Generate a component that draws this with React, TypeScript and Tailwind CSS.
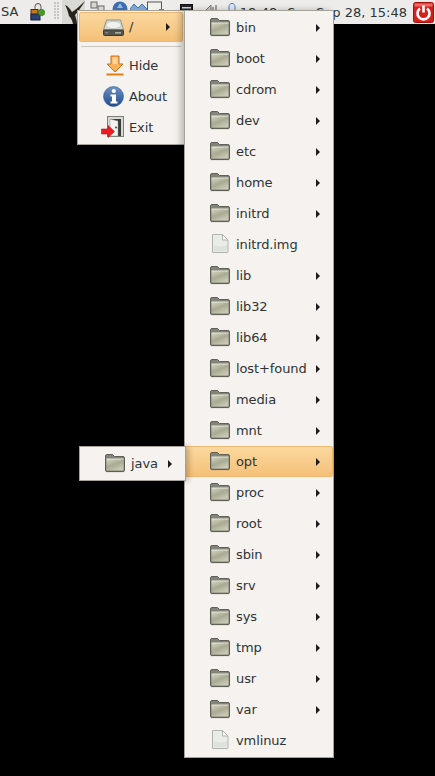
import { useId } from "react";

const rootDirs = [
  "bin", "boot", "cdrom", "dev", "etc", "home", "initrd", "initrd.img", "lib", "lib32", "lib64", "lost+found",
  "media", "mnt", "opt", "proc", "root", "sbin", "srv", "sys", "tmp", "usr", "var", "vmlinuz",
];
const plainFiles = ["initrd.img", "vmlinuz"];

const FolderIcon = () => {
  const id = useId();
  return (
    <svg width="20" height="20" viewBox="0 0 20 20" className="block shrink-0 mb-[2px]">
      <defs>
        <linearGradient id={id} x1="0" y1="0" x2="0.6" y2="1">
          <stop offset="0" stopColor="#d6d7c4" />
          <stop offset="0.55" stopColor="#a8aa92" />
          <stop offset="1" stopColor="#c8c9b5" />
        </linearGradient>
      </defs>
      <rect x="0.5" y="18" width="19" height="1.5" fill="#000" opacity="0.12" />
      <path d="M0.5 3 Q0.5 1.5 2 1.5 H7.5 L9.5 3.5 H18 Q19.5 3.5 19.5 5 V17 Q19.5 18.5 18 18.5 H2 Q0.5 18.5 0.5 17 Z" fill="#84857a" stroke="#5f6056" />
      <path d="M1.5 6 H18.5 V17.5 H1.5 Z" fill={`url(#${id})`} />
      <path d="M1.5 6 H18.5" stroke="#e6e7d9" />
    </svg>
  );
};

const FileIcon = () => (
  <svg width="20" height="21" viewBox="0 0 20 21" className="block shrink-0 mb-[2px]">
    <path d="M2.5 1.5 H12.5 L18 7 V19 Q18 19.5 17.5 19.5 H3 Q2.5 19.5 2.5 19 Z" fill="#e9ebe6" stroke="#b0b2ac" />
    <path d="M12.5 1.5 V7 H18 Z" fill="#fbfbfa" stroke="#b0b2ac" />
    <path d="M4 18 H17 V12 Q10 15 4 12 Z" fill="#dfe1dc" />
  </svg>
);

const DiskIcon = () => (
  <svg width="21" height="17" viewBox="0 0 21 17" className="block shrink-0">
    <path d="M3.5 1 H17.5 L20.5 11 H0.5 Z" fill="#d8dbd5" stroke="#8e908a" />
    <ellipse cx="10.5" cy="6" rx="7.5" ry="3.6" fill="#f1f2ef" stroke="#b7b9b3" strokeWidth="0.6" />
    <rect x="0.5" y="11" width="20" height="5.5" rx="1" fill="#55574f" stroke="#3a3b36" />
    <rect x="12" y="13" width="6" height="1.6" fill="#a9aba4" />
    <rect x="2.5" y="13" width="2.5" height="1.4" fill="#8a8c85" />
  </svg>
);

const HideIcon = () => (
  <svg width="18" height="21" viewBox="0 0 18 21" className="shrink-0">
    <path d="M5 1 H13 V9 H17 L9 17 L1 9 H5 Z" fill="#f9b35a" stroke="#ce6e12" />
    <path d="M6.5 2.5 H11.5 V9 H6.5 Z" fill="#fbd29c" />
    <rect x="0.5" y="18.5" width="17" height="2" fill="#e37e15" />
  </svg>
);

const InfoIcon = () => {
  const id = useId();
  return (
    <svg width="21" height="21" viewBox="0 0 21 21" className="shrink-0">
      <defs>
        <linearGradient id={id} x1="0" y1="0" x2="0" y2="1">
          <stop offset="0" stopColor="#6f94c4" />
          <stop offset="1" stopColor="#1f4a8c" />
        </linearGradient>
      </defs>
      <circle cx="10.5" cy="10.5" r="10" fill={`url(#${id})`} stroke="#2f5a96" strokeWidth="0.6" />
      <circle cx="10.8" cy="5" r="2.1" fill="#fff" />
      <path d="M7.5 8.5 H13 V15.5 H14.5 V17.5 H7.5 V15.5 H9 V10.5 H7.5 Z" fill="#fff" />
    </svg>
  );
};

const ExitIcon = () => (
  <svg width="23" height="23" viewBox="0 0 23 23" className="shrink-0">
    <rect x="6.5" y="0.5" width="16" height="20" fill="#d9dad6" stroke="#7d7f7a" />
    <rect x="9" y="3" width="11" height="17" fill="#3b3c39" />
    <path d="M9 3 L17 5 V20 H9 Z" fill="#f3f3f0" stroke="#8a8c86" strokeWidth="0.5" />
    <circle cx="15" cy="11.5" r="0.9" fill="#333" />
    <path d="M0.5 13 H7 V9.5 L13.5 15.5 L7 21.5 V18 H0.5 Z" fill="#ee1c25" stroke="#b50d14" strokeWidth="0.6" />
  </svg>
);

const SessionIcon = () => (
  <svg width="15" height="18" viewBox="0 0 15 18" className="shrink-0">
    <rect x="5" y="0.5" width="6" height="8" rx="3" fill="#e8e6df" stroke="#555" />
    <rect x="1" y="6.5" width="7" height="10" fill="#c6761e" stroke="#3a3020" />
    <rect x="1" y="11" width="9" height="6" fill="#2a3f73" stroke="#1c2440" />
    <circle cx="11.5" cy="9.5" r="3.2" fill="#4e9a2a" stroke="#2d6a14" strokeWidth="0.6" />
  </svg>
);

const BatIcon = () => (
  <svg width="24" height="24" viewBox="0 0 24 24" className="shrink-0">
    <path d="M3 5 C6 6 8 9 10 12 C13 10 18 6 23 1 C20 6 16 12 13 15 C14 18 15 21 15 24 H11 C10 20 9 18 7 16 C6 12 5 8 3 5 Z" fill="#2a2419" />
  </svg>
);

const PowerIcon = () => (
  <svg width="21" height="21" viewBox="0 0 21 21" className="shrink-0">
    <rect x="0.5" y="0.5" width="20" height="20" rx="2" fill="#d5201e" stroke="#a01010" />
    <rect x="1.5" y="1.5" width="18" height="3" fill="#ec6a62" />
    <path d="M7 6.5 A6 6 0 1 0 14 6.5" fill="none" stroke="#fff" strokeWidth="2.6" />
    <rect x="9.2" y="3.5" width="2.6" height="7" fill="#fff" />
  </svg>
);

// the part of the tray that shows above the open menus
const TrayIcons = () => (
  <div className="flex items-start h-6 pt-[1px]">
    <svg width="16" height="16" viewBox="0 0 16 16" className="ml-[5px]">
      <rect x="1" y="1" width="6" height="6" fill="#d8d8d2" stroke="#666" />
      <rect x="8" y="5" width="6" height="6" fill="#d8d8d2" stroke="#666" />
    </svg>
    <svg width="16" height="16" viewBox="0 0 16 16" className="ml-[6px]">
      <circle cx="8" cy="8" r="7.5" fill="#3a6eb0" />
      <path d="M8 2 L11 7 H5 Z" fill="#fff" opacity="0.5" />
    </svg>
    <svg width="17" height="16" viewBox="0 0 17 16" className="ml-[2px]">
      <path d="M0 8 L4 3 L8 7 L12 3 L17 8 V16 H0 Z" fill="#7ba6d4" stroke="#3f74b0" />
    </svg>
    <svg width="18" height="16" viewBox="0 0 18 16">
      <rect x="0.5" y="1" width="14" height="14" fill="#f0f0ec" stroke="#555" />
      <rect x="12" y="8" width="5" height="5" fill="#5c9a3a" />
    </svg>
    <svg width="13" height="16" viewBox="0 0 13 16" className="ml-[15px] mt-[3px]">
      <rect x="0.5" y="0.5" width="12" height="11" fill="#26272a" stroke="#111" />
      <rect x="2" y="3" width="9" height="1.5" fill="#d8d8d2" />
    </svg>
    <svg width="17" height="14" viewBox="0 0 17 14" className="ml-[7px] mt-[3px]">
      <path d="M1 11 L11 1 V11 Z" fill="#c9c9c4" stroke="#77776f" />
      <path d="M13 3 V12 M16 1 V12" stroke="#55554f" />
    </svg>
    <svg width="10" height="14" viewBox="0 0 10 14" className="ml-[10px] mt-[2px]">
      <path d="M5 0.5 A3 3 0 0 1 8 4 V8 H2 V4 A3 3 0 0 1 5 0.5 Z" fill="#dfe8f4" stroke="#4c7cc0" />
    </svg>
  </div>
);

const Arrow = () => <span className="block w-0 h-0 border-y-[4px] border-y-transparent border-l-[4px] border-l-[#1c1c1c]" />;

const DirRow = ({ name }: { name: string }) => {
  const active = name === "opt";
  return (
    <div
      className={
        active
          ? "h-[31px] flex items-center pl-[24px] pr-[12px] rounded-[2px] border border-[#edb970] bg-gradient-to-b from-[#fbd89f] to-[#f5c078]"
          : "h-[31px] flex items-center pl-[25px] pr-[13px]"
      }
    >
      {plainFiles.includes(name) ? <FileIcon /> : <FolderIcon />}
      <span className="ml-[6px] flex-1">{name}</span>
      {!plainFiles.includes(name) && <Arrow />}
    </div>
  );
};

const ActionRow = ({ icon, label }: { icon: React.ReactNode; label: string }) => (
  <div className="h-[31px] flex items-center">
    <div className="w-[49px] pr-[4px] flex justify-end items-center shrink-0">{icon}</div>
    <span className="ml-px">{label}</span>
  </div>
);

export default function App() {
  return (
    <div className="relative w-[435px] h-[776px] bg-black overflow-hidden text-[13px] tracking-[-0.1px] text-[#2e3436] font-['DejaVu_Sans',sans-serif]">
      <div className="h-6 bg-[#edecea] flex items-center">
        <span className="ml-[1px] w-[29px]">SA</span>
        <SessionIcon />
        <div className="ml-[9px] w-[5px] h-5 grid grid-cols-2 gap-[1px] content-start">
          {Array.from({ length: 12 }).map((_, i) => (
            <span key={i} className="w-[2px] h-[2px] bg-[#c6c5c0]" />
          ))}
        </div>
        <div className="ml-[3px] w-[23px] h-6 bg-[#d9dad5] flex items-center justify-center">
          <BatIcon />
        </div>
        <TrayIcons />
        <div className="flex-1 flex justify-end items-center whitespace-pre mt-[2px] tracking-normal">
          <span>18:48</span>
          <span className="ml-[10px]">Sun Sep 28, 15:48</span>
        </div>
        <div className="ml-[6px] mr-[1px]">
          <PowerIcon />
        </div>
      </div>

      {/* root menu */}
      <div className="absolute left-[77px] top-[10px] w-[108px] h-[135px] bg-[#f6f2ef] border border-[#a5a299] py-[1px] px-[1px]">
        <div className="h-[30px] flex items-center rounded-[2px] border border-[#edb970] bg-gradient-to-b from-[#fbd89f] to-[#f5c078]">
          <div className="ml-[23px]">
            <DiskIcon />
          </div>
          <span className="ml-[5px] flex-1">/</span>
          <span className="mr-[12px]">
            <Arrow />
          </span>
        </div>
        <div className="h-[8px] flex items-center px-[2px]">
          <div className="w-full border-t border-[#c9c6bf]" />
        </div>
        <ActionRow icon={<HideIcon />} label="Hide" />
        <ActionRow icon={<InfoIcon />} label="About" />
        <ActionRow icon={<ExitIcon />} label="Exit" />
      </div>

      {/* directory listing of / */}
      <div className="absolute left-[184px] top-[10px] w-[150px] h-[748px] bg-[#f6f2ef] border border-[#a5a299] py-[1px] shadow-[-4px_0_6px_rgba(0,0,0,0.22)]">
        {rootDirs.map((d) => (
          <DirRow key={d} name={d} />
        ))}
      </div>

      {/* opened submenu of opt */}
      <div className="absolute left-[79px] top-[446px] w-[107px] h-[35px] bg-[#f6f2ef] border border-[#a5a299] flex items-center shadow-[3px_0_5px_rgba(0,0,0,0.22)]">
        <div className="ml-[25px]">
          <FolderIcon />
        </div>
        <span className="ml-[6px] flex-1">java</span>
        <span className="mr-[13px]">
          <Arrow />
        </span>
      </div>
    </div>
  );
}
